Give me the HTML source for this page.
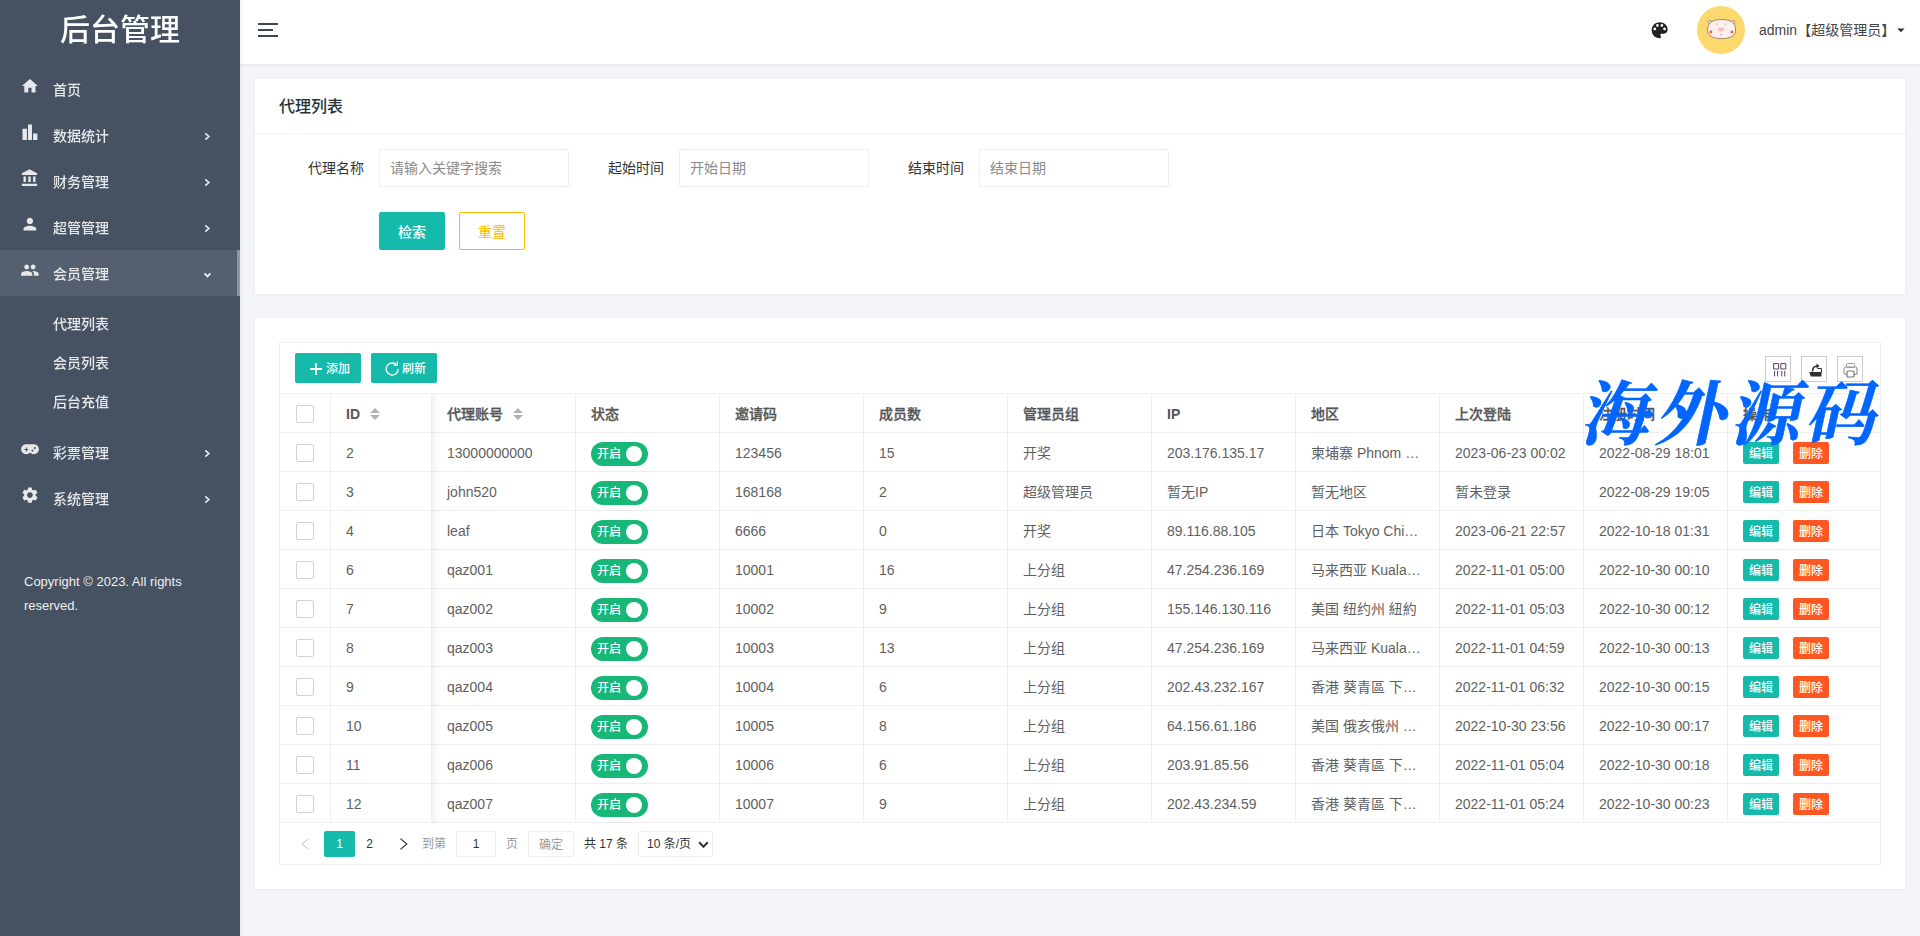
<!DOCTYPE html>
<html lang="zh-CN">
<head>
<meta charset="utf-8">
<title>后台管理</title>
<style>
*{box-sizing:border-box;margin:0;padding:0}
html,body{width:1920px;height:936px;overflow:hidden}
body{position:relative;background:#f4f5f9;font-family:"Liberation Sans","Noto Sans CJK SC",sans-serif;font-size:14px;color:#555;line-height:1}
.abs{position:absolute}
/* sidebar */
#side{position:absolute;left:0;top:0;width:240px;height:936px;background:#465161;color:#e6e8eb;z-index:5;box-shadow:1px 0 5px rgba(0,21,41,.06)}
#logo{will-change:transform;position:absolute;left:0;top:0;width:240px;height:64px;line-height:60px;text-align:center;font-size:30px;font-weight:500;color:#fff}
.mi{will-change:transform;position:absolute;left:0;width:240px;height:46px}
.mi.on{background:#555f6f}
.mi.on:after{content:"";position:absolute;right:0;top:0;width:3px;height:46px;background:#8e96a3}
.mi .tx{position:absolute;left:53px;top:0;line-height:48px;font-size:14px;font-weight:500;color:#e6e8eb}
.mi svg.ic{position:absolute;left:21px;top:11px;width:18px;height:18px;fill:#f0f0f0}
.mi svg.ar{position:absolute;left:203px;top:19px;width:8px;height:8px;fill:none;stroke:#e8e8e8;stroke-width:1.5}
.si{will-change:transform;position:absolute;left:53px;height:39px;line-height:41px;font-size:14px;font-weight:500;color:#e6e8eb}
#copy{position:absolute;left:24px;top:570px;width:180px;line-height:24px;font-size:13px;color:#f0f0f0}
/* header */
#head{position:absolute;left:240px;top:0;width:1680px;height:64px;background:#fff;box-shadow:0 1px 4px rgba(0,21,41,.06)}
#uname{left:1519px;top:0;line-height:60px;font-size:14px;color:#444;white-space:nowrap}
#wm{position:absolute;left:1586px;top:364px;font-family:"Noto Serif CJK SC",serif;font-weight:700;font-size:70px;line-height:90px;letter-spacing:5px;color:#0066ff;-webkit-text-stroke:.5px #0066ff;white-space:nowrap;transform:skewX(-12deg);transform-origin:0 50%}
/* cards */
#tb{position:absolute;left:24px;top:24px;width:1602px;height:523px;border:1px solid #eee}
.hl{position:absolute;left:0;width:1600px;height:1px;background:#eee}
.vl{position:absolute;top:51px;width:1px;height:429px;background:#eee}
.th,.td{position:absolute;line-height:40px;font-size:14px;white-space:nowrap}
.th{font-weight:500;color:#555;-webkit-text-stroke:.3px #555}
.th b{font-weight:700;-webkit-text-stroke:0}
.td{color:#5f5f5f}
.tbtn{font-weight:500;position:absolute;top:10px;width:66px;height:30px;line-height:30px;background:#16baaa;color:#fff;font-size:12px;border-radius:2px;text-align:center;white-space:nowrap}
.tbtn svg{vertical-align:-2px}
.tool{position:absolute;top:13px;width:26px;height:26px;border:1px solid #ccc}
.cb{position:absolute;width:18px;height:18px;border:1px solid #d2d2d2;border-radius:2px;background:#fff}
.sw{position:absolute;width:57px;height:24px;border-radius:12px;background:#16b777}
.sw span{font-weight:500;position:absolute;left:6px;top:1px;line-height:23px;font-size:12px;color:#fff}
.sw i{position:absolute;left:35px;top:4px;width:16px;height:16px;border-radius:8px;background:#fff}
.xb{font-weight:500;position:absolute;width:36px;height:22px;line-height:24px;border-radius:2px;color:#fff;font-size:12px;text-align:center}
.pg{position:absolute;height:26px;line-height:26px;font-size:12px;text-align:center;white-space:nowrap}

.lab{position:absolute;top:70px;width:95px;text-align:right;line-height:38px;font-size:14px;color:#333}
.inp{position:absolute;top:70px;width:190px;height:38px;border:1px solid #eee;border-radius:2px;padding-left:10px;line-height:36px;font-size:14px;color:#8a8a8a;background:#fff}
.btn{position:absolute;width:66px;height:38px;line-height:38px;text-align:center;font-size:14px;border-radius:2px}

.card{position:absolute;left:255px;width:1650px;background:#fff;box-shadow:0 1px 3px rgba(0,0,0,.05)}
</style>
</head>
<body>
<div id="side">
  <div id="logo">后台管理</div>
  <div class="mi" style="top:66px"><span class="tx">首页</span></div>
  <div class="mi" style="top:112px"><span class="tx">数据统计</span></div>
  <div class="mi" style="top:158px"><span class="tx">财务管理</span></div>
  <div class="mi" style="top:204px"><span class="tx">超管管理</span></div>
  <div class="mi on" style="top:250px"><span class="tx">会员管理</span></div>
  <div class="mi" style="top:429px"><span class="tx">彩票管理</span></div>
  <div class="mi" style="top:475px"><span class="tx">系统管理</span></div>
  <div class="si" style="top:304px">代理列表</div>
  <div class="si" style="top:343px">会员列表</div>
  <div class="si" style="top:382px">后台充值</div>
  <div id="copy">Copyright © 2023. All rights reserved.</div>
<svg class="abs" style="left:0;top:0" width="240" height="936" viewBox="0 0 240 936">
<path fill="#e6e8eb" transform="translate(20.3 76.5) scale(0.8)" d="M10 20v-6h4v6h5v-8h3L12 3 2 12h3v8z"/>
<path fill="none" stroke="#ececf0" stroke-width="1.6" d="M205.3 133.4 L208.8 136.5 L205.3 139.6"/>
<path fill="#e6e8eb" transform="translate(20.3 168.5) scale(0.8)" d="M4 10v7h3v-7H4zm6 0v7h3v-7h-3zM2 22h19v-3H2v3zm14-12v7h3v-7h-3zm-4.5-9L2 6v2h19V6l-9.5-5z"/>
<path fill="none" stroke="#ececf0" stroke-width="1.6" d="M205.3 179.4 L208.8 182.5 L205.3 185.6"/>
<path fill="#e6e8eb" transform="translate(20.3 214.5) scale(0.8)" d="M12 12c2.21 0 4-1.79 4-4s-1.79-4-4-4-4 1.79-4 4 1.79 4 4 4zm0 2c-2.67 0-8 1.34-8 4v2h16v-2c0-2.66-5.33-4-8-4z"/>
<path fill="none" stroke="#ececf0" stroke-width="1.6" d="M205.3 225.4 L208.8 228.5 L205.3 231.6"/>
<path fill="#e6e8eb" transform="translate(20.3 260.5) scale(0.8)" d="M16 11c1.66 0 2.99-1.34 2.99-3S17.66 5 16 5c-1.66 0-3 1.34-3 3s1.34 3 3 3zm-8 0c1.66 0 2.99-1.34 2.99-3S9.66 5 8 5C6.34 5 5 6.34 5 8s1.34 3 3 3zm0 2c-2.33 0-7 1.17-7 3.5V19h14v-2.5c0-2.33-4.67-3.5-7-3.5zm8 0c-.29 0-.62.02-.97.05 1.16.84 1.97 1.97 1.97 3.45V19h6v-2.5c0-2.33-4.67-3.5-7-3.5z"/>
<path fill="none" stroke="#ececf0" stroke-width="1.900" d="M204.500 273.400 L207.500 276.400 L210.500 273.400"/>
<path fill="none" stroke="#ececf0" stroke-width="1.6" d="M205.3 450.4 L208.8 453.5 L205.3 456.6"/>
<path fill="#e6e8eb" transform="translate(20.3 485.5) scale(0.8)" d="M19.14 12.94c.04-.3.06-.61.06-.94 0-.32-.02-.64-.07-.94l2.03-1.58c.18-.14.23-.41.12-.61l-1.92-3.32c-.12-.22-.37-.29-.59-.22l-2.39.96c-.5-.38-1.03-.7-1.62-.94l-.36-2.54c-.04-.24-.24-.41-.48-.41h-3.84c-.24 0-.43.17-.47.41l-.36 2.54c-.59.24-1.13.57-1.62.94l-2.39-.96c-.22-.08-.47 0-.59.22L2.74 8.87c-.12.21-.08.47.12.61l2.03 1.58c-.05.3-.09.63-.09.94s.02.64.07.94l-2.03 1.58c-.18.14-.23.41-.12.61l1.92 3.32c.12.22.37.29.59.22l2.39-.96c.5.38 1.03.7 1.62.94l.36 2.54c.05.24.24.41.48.41h3.84c.24 0 .44-.17.47-.41l.36-2.54c.59-.24 1.13-.56 1.62-.94l2.39.96c.22.08.47 0 .59-.22l1.92-3.32c.12-.22.07-.47-.12-.61l-2.01-1.58zM12 15.6c-1.98 0-3.6-1.62-3.6-3.6s1.62-3.600 3.600-3.600 3.600 1.620 3.600 3.600-1.620 3.600-3.600 3.600z"/>
<path fill="none" stroke="#ececf0" stroke-width="1.6" d="M205.3 496.4 L208.8 499.5 L205.3 502.6"/>
<path fill="#e6e8eb" d="M22.5 128.8h4.4V140h-4.4zM28 124.6h4V140h-4zM33.1 133.6h4.3V140h-4.3z"/>
<path fill="#e6e8eb" fill-rule="evenodd" d="M26.1 444.3h7.8a5 5 0 0 1 0 10a5 5 0 0 1 -3.2 -1.2h-1.4a5 5 0 0 1 -3.2 1.200a5 5 0 0 1 0 -10zM25.850 447.500v1.450h-1.450v1h1.450v1.450h1v-1.450h1.450v-1h-1.450v-1.450zM34.900 447.100a1 1 0 1 0 0.010 0zM32.500 449.400a1 1 0 1 0 0.010 0z"/>
</svg>
</div>
<div id="head">
<svg class="abs" style="left:0;top:0" width="1680" height="64" viewBox="240 0 1680 64">
<path fill="#3d4653" d="M258 23h20v2h-20zM258 29h15v2h-15zM258 35h20v2h-20z"/>
<path fill="#222" transform="translate(1649 19.6) scale(0.889)" d="M12 3c-4.970 0-9 4.030-9 9s4.030 9 9 9c.83 0 1.500-.67 1.500-1.500 0-.39-.15-.74-.39-1.010-.23-.26-.38-.61-.38-.99 0-.83.67-1.500 1.500-1.500H16c2.760 0 5-2.240 5-5 0-4.420-4.030-8-9-8zm-5.500 9c-.83 0-1.500-.67-1.500-1.500S5.670 9 6.500 9 8 9.670 8 10.500 7.330 12 6.500 12zm3-4C8.670 8 8 7.330 8 6.500S8.670 5 9.500 5s1.500.67 1.500 1.500S10.330 8 9.500 8zm5 0c-.83 0-1.500-.67-1.500-1.500S13.670 5 14.500 5s1.500.67 1.500 1.500S15.330 8 14.500 8zm3 4c-.83 0-1.500-.67-1.500-1.500S16.670 9 17.500 9s1.500.67 1.500 1.500-.67 1.500-1.500 1.500z"/>
<circle cx="1721" cy="30" r="24" fill="#fdd86f"/>
<circle cx="1710" cy="22.300" r="1.800" fill="#fde3e3" stroke="#6b4a3a" stroke-width=".5"/>
<circle cx="1733" cy="22.300" r="1.800" fill="#fde3e3" stroke="#6b4a3a" stroke-width=".5"/>
<path d="M1707.600 30c0-6.500 4-10.500 14-10.500s14 4 14 10.500c0 5.500-5 8.600-14 8.600s-14-3.100-14-8.600z" fill="#fdefee" stroke="#6b4a3a" stroke-width=".6"/>
<ellipse cx="1721" cy="29.200" rx="3.300" ry="2" fill="#f7c1c1"/>
<circle cx="1710.900" cy="32" r="1.400" fill="#ff5a2e"/>
<circle cx="1731.900" cy="32" r="1.400" fill="#ff5a2e"/>
<path d="M1716.600 23.500v1.200M1725.500 23.500v1.200M1720.800 33.600q.8 .2 .6 1.700" stroke="#6b4a3a" stroke-width=".6" fill="none"/>
<path d="M1897.200 28.500h7.400l-3.700 3.700z" fill="#333"/>
</svg>
<div class="abs" id="uname">admin【超级管理员】</div>
</div>
<div class="card" id="c1" style="top:79px;height:215px">
<div class="abs" style="left:24px;top:0;line-height:56px;font-size:16px;font-weight:500;color:#263238">代理列表</div>
<div class="abs" style="left:0;top:54px;width:1650px;height:1px;background:#f4f4f6"></div>
<div class="lab" style="left:14px">代理名称</div><div class="inp" style="left:124px">请输入关键字搜索</div>
<div class="lab" style="left:314px">起始时间</div><div class="inp" style="left:424px">开始日期</div>
<div class="lab" style="left:614px">结束时间</div><div class="inp" style="left:724px">结束日期</div>
<div class="btn" style="left:124px;top:133px;background:#16baaa;color:#fff;line-height:40px;font-weight:500">检索</div>
<div class="btn" style="left:204px;top:133px;background:#fff;color:#ffb800;border:1px solid #ffb800">重置</div>
</div>
<div class="card" id="c2" style="top:318px;height:571px">
<div id="tb">
<div class="tbtn" style="left:15px"><svg class="abs" style="left:15px;top:10px" width="12" height="12" viewBox="0 0 12 12"><path d="M6 0v12M0 6h12" stroke="#fff" stroke-width="1.800" fill="none"/></svg><span class="abs" style="left:31px;top:1px">添加</span></div>
<div class="tbtn" style="left:91px"><svg class="abs" style="left:14px;top:8px" width="15" height="15" viewBox="0 0 15 15"><path d="M13.200 8a6 6 0 1 1 -2.300 -4.700" stroke="#fff" stroke-width="1.300" fill="none"/><path d="M12.300 .5v3.600h-3.600" stroke="#fff" stroke-width="1.300" fill="none"/></svg><span class="abs" style="left:31px;top:1px">刷新</span></div>
<div class="tool" style="left:1485px"><svg width="24" height="24" viewBox="0 0 24 24"><path d="M7.600 6.600h5v5.400h-5zM14.800 6.600h5v5.400h-5z" fill="none" stroke="#5a3a6a" stroke-width="1"/><path d="M8.600 14v5.400M11.600 14v5.400M15.800 14v5.400M18.800 14v5.400" stroke="#5a3a6a" stroke-width="1" fill="none"/></svg></div>
<div class="tool" style="left:1521px"><svg width="24" height="24" viewBox="0 0 24 24"><path d="M7.300 15h12.200v4.600h-10.800z" fill="#2f2f2f"/><path d="M15.500 11.500h4v4" fill="none" stroke="#2f2f2f" stroke-width="1"/><path d="M10.500 14.500c0-3.500 2-5.500 5-5.500" fill="none" stroke="#2f2f2f" stroke-width="1.500"/><path d="M14.500 6.500l3 2.500l-3 2.500z" fill="#2f2f2f"/></svg></div>
<div class="tool" style="left:1557px"><svg width="24" height="24" viewBox="0 0 24 24"><rect x="8.500" y="6.500" width="8" height="4" rx="1" fill="none" stroke="#999" stroke-width="1"/><rect x="6" y="10" width="13" height="7.500" rx="2" fill="none" stroke="#999" stroke-width="1.200"/><rect x="9" y="14" width="7" height="6" rx="1" fill="#fff" stroke="#777" stroke-width="1.200"/></svg></div>
<div class="hl" style="top:50px"></div>
<div class="hl" style="top:89px"></div>
<div class="hl" style="top:128px"></div>
<div class="hl" style="top:167px"></div>
<div class="hl" style="top:206px"></div>
<div class="hl" style="top:245px"></div>
<div class="hl" style="top:284px"></div>
<div class="hl" style="top:323px"></div>
<div class="hl" style="top:362px"></div>
<div class="hl" style="top:401px"></div>
<div class="hl" style="top:440px"></div>
<div class="hl" style="top:479px"></div>
<div class="vl" style="left:50px"></div>
<div class="vl" style="left:151px"></div>
<div class="vl" style="left:295px"></div>
<div class="vl" style="left:439px"></div>
<div class="vl" style="left:583px"></div>
<div class="vl" style="left:727px"></div>
<div class="vl" style="left:871px"></div>
<div class="vl" style="left:1015px"></div>
<div class="vl" style="left:1159px"></div>
<div class="vl" style="left:1303px"></div>
<div class="vl" style="left:1447px"></div>
<div class="abs" style="left:152px;top:51px;width:9px;height:429px;background:linear-gradient(to right,rgba(0,0,0,.05),rgba(0,0,0,.02) 40%,rgba(0,0,0,0))"></div>
<div class="vl" style="left:50px"></div>
<div class="vl" style="left:151px"></div>
<div class="hl" style="top:89px;width:152px"></div>
<div class="hl" style="top:128px;width:152px"></div>
<div class="hl" style="top:167px;width:152px"></div>
<div class="hl" style="top:206px;width:152px"></div>
<div class="hl" style="top:245px;width:152px"></div>
<div class="hl" style="top:284px;width:152px"></div>
<div class="hl" style="top:323px;width:152px"></div>
<div class="hl" style="top:362px;width:152px"></div>
<div class="hl" style="top:401px;width:152px"></div>
<div class="hl" style="top:440px;width:152px"></div>
<div class="hl" style="top:479px;width:152px"></div>
<div class="th" style="left:66px;top:51px"><b>ID</b></div>
<div class="th" style="left:167px;top:51px">代理账号</div>
<div class="th" style="left:311px;top:51px">状态</div>
<div class="th" style="left:455px;top:51px">邀请码</div>
<div class="th" style="left:599px;top:51px">成员数</div>
<div class="th" style="left:743px;top:51px">管理员组</div>
<div class="th" style="left:887px;top:51px"><b>IP</b></div>
<div class="th" style="left:1031px;top:51px">地区</div>
<div class="th" style="left:1175px;top:51px">上次登陆</div>
<div class="th" style="left:1319px;top:51px">注册时间</div>
<div class="th" style="left:1463px;top:51px">操作</div>
<svg class="abs" style="left:90px;top:65px" width="10" height="12" viewBox="0 0 10 12"><path d="M0 5L5 0L10 5zM0 7L5 12L10 7z" fill="#b2b2b2"/></svg>
<svg class="abs" style="left:233px;top:65px" width="10" height="12" viewBox="0 0 10 12"><path d="M0 5L5 0L10 5zM0 7L5 12L10 7z" fill="#b2b2b2"/></svg>
<div class="cb" style="left:16px;top:62px"></div>
<div class="cb" style="left:16px;top:101px"></div>
<div class="cb" style="left:16px;top:140px"></div>
<div class="cb" style="left:16px;top:179px"></div>
<div class="cb" style="left:16px;top:218px"></div>
<div class="cb" style="left:16px;top:257px"></div>
<div class="cb" style="left:16px;top:296px"></div>
<div class="cb" style="left:16px;top:335px"></div>
<div class="cb" style="left:16px;top:374px"></div>
<div class="cb" style="left:16px;top:413px"></div>
<div class="cb" style="left:16px;top:452px"></div>
<div class="td" style="left:66px;top:90px">2</div>
<div class="td" style="left:167px;top:90px">13000000000</div>
<div class="sw" style="left:311px;top:99px"><span>开启</span><i></i></div>
<div class="td" style="left:455px;top:90px">123456</div>
<div class="td" style="left:599px;top:90px">15</div>
<div class="td" style="left:743px;top:90px">开奖</div>
<div class="td" style="left:887px;top:90px">203.176.135.17</div>
<div class="td" style="left:1031px;top:90px">柬埔寨 Phnom …</div>
<div class="td" style="left:1175px;top:90px">2023-06-23 00:02</div>
<div class="td" style="left:1319px;top:90px">2022-08-29 18:01</div>
<div class="xb" style="left:1463px;top:99px;background:#16baaa">编辑</div>
<div class="xb" style="left:1513px;top:99px;background:#ff5722">删除</div>
<div class="td" style="left:66px;top:129px">3</div>
<div class="td" style="left:167px;top:129px">john520</div>
<div class="sw" style="left:311px;top:138px"><span>开启</span><i></i></div>
<div class="td" style="left:455px;top:129px">168168</div>
<div class="td" style="left:599px;top:129px">2</div>
<div class="td" style="left:743px;top:129px">超级管理员</div>
<div class="td" style="left:887px;top:129px">暂无IP</div>
<div class="td" style="left:1031px;top:129px">暂无地区</div>
<div class="td" style="left:1175px;top:129px">暂未登录</div>
<div class="td" style="left:1319px;top:129px">2022-08-29 19:05</div>
<div class="xb" style="left:1463px;top:138px;background:#16baaa">编辑</div>
<div class="xb" style="left:1513px;top:138px;background:#ff5722">删除</div>
<div class="td" style="left:66px;top:168px">4</div>
<div class="td" style="left:167px;top:168px">leaf</div>
<div class="sw" style="left:311px;top:177px"><span>开启</span><i></i></div>
<div class="td" style="left:455px;top:168px">6666</div>
<div class="td" style="left:599px;top:168px">0</div>
<div class="td" style="left:743px;top:168px">开奖</div>
<div class="td" style="left:887px;top:168px">89.116.88.105</div>
<div class="td" style="left:1031px;top:168px">日本 Tokyo Chi…</div>
<div class="td" style="left:1175px;top:168px">2023-06-21 22:57</div>
<div class="td" style="left:1319px;top:168px">2022-10-18 01:31</div>
<div class="xb" style="left:1463px;top:177px;background:#16baaa">编辑</div>
<div class="xb" style="left:1513px;top:177px;background:#ff5722">删除</div>
<div class="td" style="left:66px;top:207px">6</div>
<div class="td" style="left:167px;top:207px">qaz001</div>
<div class="sw" style="left:311px;top:216px"><span>开启</span><i></i></div>
<div class="td" style="left:455px;top:207px">10001</div>
<div class="td" style="left:599px;top:207px">16</div>
<div class="td" style="left:743px;top:207px">上分组</div>
<div class="td" style="left:887px;top:207px">47.254.236.169</div>
<div class="td" style="left:1031px;top:207px">马来西亚 Kuala…</div>
<div class="td" style="left:1175px;top:207px">2022-11-01 05:00</div>
<div class="td" style="left:1319px;top:207px">2022-10-30 00:10</div>
<div class="xb" style="left:1463px;top:216px;background:#16baaa">编辑</div>
<div class="xb" style="left:1513px;top:216px;background:#ff5722">删除</div>
<div class="td" style="left:66px;top:246px">7</div>
<div class="td" style="left:167px;top:246px">qaz002</div>
<div class="sw" style="left:311px;top:255px"><span>开启</span><i></i></div>
<div class="td" style="left:455px;top:246px">10002</div>
<div class="td" style="left:599px;top:246px">9</div>
<div class="td" style="left:743px;top:246px">上分组</div>
<div class="td" style="left:887px;top:246px">155.146.130.116</div>
<div class="td" style="left:1031px;top:246px">美国 纽约州 紐約</div>
<div class="td" style="left:1175px;top:246px">2022-11-01 05:03</div>
<div class="td" style="left:1319px;top:246px">2022-10-30 00:12</div>
<div class="xb" style="left:1463px;top:255px;background:#16baaa">编辑</div>
<div class="xb" style="left:1513px;top:255px;background:#ff5722">删除</div>
<div class="td" style="left:66px;top:285px">8</div>
<div class="td" style="left:167px;top:285px">qaz003</div>
<div class="sw" style="left:311px;top:294px"><span>开启</span><i></i></div>
<div class="td" style="left:455px;top:285px">10003</div>
<div class="td" style="left:599px;top:285px">13</div>
<div class="td" style="left:743px;top:285px">上分组</div>
<div class="td" style="left:887px;top:285px">47.254.236.169</div>
<div class="td" style="left:1031px;top:285px">马来西亚 Kuala…</div>
<div class="td" style="left:1175px;top:285px">2022-11-01 04:59</div>
<div class="td" style="left:1319px;top:285px">2022-10-30 00:13</div>
<div class="xb" style="left:1463px;top:294px;background:#16baaa">编辑</div>
<div class="xb" style="left:1513px;top:294px;background:#ff5722">删除</div>
<div class="td" style="left:66px;top:324px">9</div>
<div class="td" style="left:167px;top:324px">qaz004</div>
<div class="sw" style="left:311px;top:333px"><span>开启</span><i></i></div>
<div class="td" style="left:455px;top:324px">10004</div>
<div class="td" style="left:599px;top:324px">6</div>
<div class="td" style="left:743px;top:324px">上分组</div>
<div class="td" style="left:887px;top:324px">202.43.232.167</div>
<div class="td" style="left:1031px;top:324px">香港 葵青區 下…</div>
<div class="td" style="left:1175px;top:324px">2022-11-01 06:32</div>
<div class="td" style="left:1319px;top:324px">2022-10-30 00:15</div>
<div class="xb" style="left:1463px;top:333px;background:#16baaa">编辑</div>
<div class="xb" style="left:1513px;top:333px;background:#ff5722">删除</div>
<div class="td" style="left:66px;top:363px">10</div>
<div class="td" style="left:167px;top:363px">qaz005</div>
<div class="sw" style="left:311px;top:372px"><span>开启</span><i></i></div>
<div class="td" style="left:455px;top:363px">10005</div>
<div class="td" style="left:599px;top:363px">8</div>
<div class="td" style="left:743px;top:363px">上分组</div>
<div class="td" style="left:887px;top:363px">64.156.61.186</div>
<div class="td" style="left:1031px;top:363px">美国 俄亥俄州 …</div>
<div class="td" style="left:1175px;top:363px">2022-10-30 23:56</div>
<div class="td" style="left:1319px;top:363px">2022-10-30 00:17</div>
<div class="xb" style="left:1463px;top:372px;background:#16baaa">编辑</div>
<div class="xb" style="left:1513px;top:372px;background:#ff5722">删除</div>
<div class="td" style="left:66px;top:402px">11</div>
<div class="td" style="left:167px;top:402px">qaz006</div>
<div class="sw" style="left:311px;top:411px"><span>开启</span><i></i></div>
<div class="td" style="left:455px;top:402px">10006</div>
<div class="td" style="left:599px;top:402px">6</div>
<div class="td" style="left:743px;top:402px">上分组</div>
<div class="td" style="left:887px;top:402px">203.91.85.56</div>
<div class="td" style="left:1031px;top:402px">香港 葵青區 下…</div>
<div class="td" style="left:1175px;top:402px">2022-11-01 05:04</div>
<div class="td" style="left:1319px;top:402px">2022-10-30 00:18</div>
<div class="xb" style="left:1463px;top:411px;background:#16baaa">编辑</div>
<div class="xb" style="left:1513px;top:411px;background:#ff5722">删除</div>
<div class="td" style="left:66px;top:441px">12</div>
<div class="td" style="left:167px;top:441px">qaz007</div>
<div class="sw" style="left:311px;top:450px"><span>开启</span><i></i></div>
<div class="td" style="left:455px;top:441px">10007</div>
<div class="td" style="left:599px;top:441px">9</div>
<div class="td" style="left:743px;top:441px">上分组</div>
<div class="td" style="left:887px;top:441px">202.43.234.59</div>
<div class="td" style="left:1031px;top:441px">香港 葵青區 下…</div>
<div class="td" style="left:1175px;top:441px">2022-11-01 05:24</div>
<div class="td" style="left:1319px;top:441px">2022-10-30 00:23</div>
<div class="xb" style="left:1463px;top:450px;background:#16baaa">编辑</div>
<div class="xb" style="left:1513px;top:450px;background:#ff5722">删除</div>
<svg class="abs" style="left:21px;top:495px" width="9" height="12" viewBox="0 0 9 12"><path d="M7.600 .6L1.200 6L7.600 11.400" stroke="#d2d2d2" stroke-width="1.200" fill="none"/></svg>
<div class="pg" style="left:44px;top:488px;width:31px;background:#16baaa;color:#fff;border-radius:2px">1</div>
<div class="pg" style="left:75px;top:488px;width:29px;color:#333">2</div>
<svg class="abs" style="left:119px;top:495px" width="9" height="12" viewBox="0 0 9 12"><path d="M1.400 .6L7.800 6L1.400 11.400" stroke="#333" stroke-width="1.200" fill="none"/></svg>
<div class="pg" style="left:142px;top:488px;color:#999;text-align:left">到第</div>
<div class="pg" style="left:176px;top:488px;width:40px;border:1px solid #eee;border-radius:2px;line-height:24px;color:#333">1</div>
<div class="pg" style="left:226px;top:488px;color:#999;text-align:left">页</div>
<div class="pg" style="left:248px;top:488px;width:46px;border:1px solid #eee;border-radius:2px;line-height:26px;color:#999">确定</div>
<div class="pg" style="left:304px;top:488px;color:#333;text-align:left">共 17 条</div>
<div class="pg" style="left:358px;top:488px;width:75px;border:1px solid #eee;border-radius:2px;line-height:24px;color:#333;text-align:left;padding-left:8px">10 条/页<svg class="abs" style="left:59px;top:9px" width="11" height="8" viewBox="0 0 11 8"><path d="M1.200 1.200L5.500 5.700L9.800 1.200" stroke="#333" stroke-width="2" fill="none"/></svg></div>
</div>
</div>
<div id="wm">海外源码</div>
</body>
</html>
